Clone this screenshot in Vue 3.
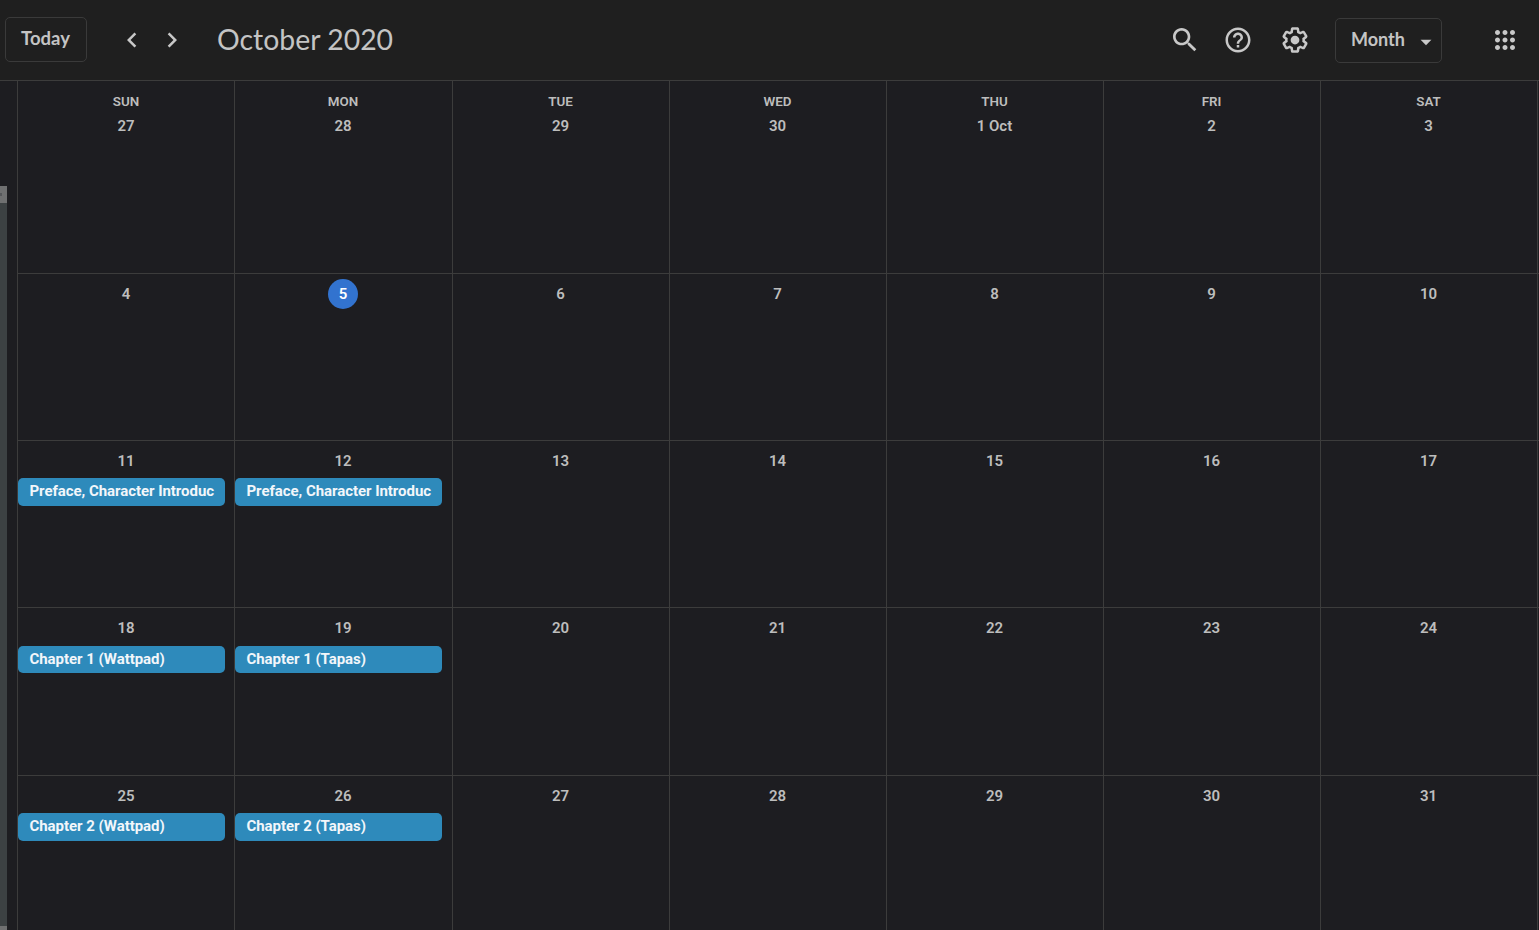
<script setup>
const names = ['SUN', 'MON', 'TUE', 'WED', 'THU', 'FRI', 'SAT']
const weeks = [
  ['27', '28', '29', '30', '1 Oct', '2', '3'],
  ['4', '5', '6', '7', '8', '9', '10'],
  ['11', '12', '13', '14', '15', '16', '17'],
  ['18', '19', '20', '21', '22', '23', '24'],
  ['25', '26', '27', '28', '29', '30', '31'],
]
const events = {
  '2-0': 'Preface, Character Introduc',
  '2-1': 'Preface, Character Introduc',
  '3-0': 'Chapter 1 (Wattpad)',
  '3-1': 'Chapter 1 (Tapas)',
  '4-0': 'Chapter 2 (Wattpad)',
  '4-1': 'Chapter 2 (Tapas)',
}
</script>

<template>
  <div class="page">
    <header class="top">
      <button class="today">Today</button>
      <div class="arrows">
        <svg class="ic" viewBox="0 0 24 24"><path d="M15.41 7.41L14 6l-6 6 6 6 1.41-1.41L10.83 12z" /></svg>
        <svg class="ic" viewBox="0 0 24 24"><path d="M8.59 16.59L10 18l6-6-6-6-1.41 1.41L13.17 12z" /></svg>
      </div>
      <h1 class="title">October 2020</h1>
      <div class="tools">
        <svg class="ic search" viewBox="0 0 24 24"><path d="M15.5 14h-.79l-.28-.27C15.41 12.59 16 11.11 16 9.5 16 5.91 13.09 3 9.5 3S3 5.91 3 9.5 5.91 16 9.5 16c1.61 0 3.09-.59 4.23-1.57l.27.28v.79l5 4.99L20.49 19l-4.99-5zm-6 0C7.01 14 5 11.99 5 9.5S7.01 5 9.5 5 14 7.01 14 9.5 11.99 14 9.5 14z" /></svg>
        <svg class="ic help" viewBox="0 0 24 24"><path d="M11 18h2v-2h-2v2zm1-16C6.48 2 2 6.48 2 12s4.48 10 10 10 10-4.48 10-10S17.52 2 12 2zm0 18c-4.41 0-8-3.59-8-8s3.59-8 8-8 8 3.59 8 8-3.59 8-8 8zm0-14c-2.21 0-4 1.79-4 4h2c0-1.1.9-2 2-2s2 .9 2 2c0 2-3 1.75-3 5h2c0-2.25 3-2.5 3-5 0-2.21-1.79-4-4-4z" /></svg>
        <svg class="ic gear" viewBox="0 0 24 24"><path d="M13.85 22.25h-3.7c-.74 0-1.36-.54-1.45-1.27l-.27-1.89c-.27-.14-.53-.29-.79-.46l-1.8.72c-.7.26-1.47-.03-1.81-.65L2.2 15.53c-.35-.66-.2-1.44.36-1.88l1.53-1.19c-.01-.15-.02-.3-.02-.46 0-.15.01-.31.02-.46l-1.52-1.19c-.59-.45-.74-1.26-.37-1.88l1.85-3.19c.34-.62 1.11-.9 1.79-.63l1.81.73c.26-.17.52-.32.78-.46l.27-1.91c.09-.7.71-1.25 1.44-1.25h3.7c.74 0 1.36.54 1.45 1.27l.27 1.89c.27.14.53.29.79.46l1.8-.72c.71-.26 1.48.03 1.82.65l1.84 3.18c.36.66.2 1.44-.36 1.88l-1.52 1.19c.01.15.02.3.02.46s-.01.31-.02.46l1.52 1.19c.56.45.72 1.23.37 1.86l-1.86 3.22c-.34.62-1.11.9-1.8.63l-1.8-.72c-.26.17-.52.32-.78.46l-.27 1.91c-.1.68-.72 1.22-1.46 1.22zm-3.23-2h2.76l.37-2.55.53-.22c.44-.18.88-.44 1.34-.78l.45-.34 2.38.96 1.38-2.4-2.03-1.58.07-.56c.03-.26.06-.51.06-.78s-.03-.53-.06-.78l-.07-.56 2.03-1.58-1.39-2.4-2.39.96-.45-.35c-.42-.32-.87-.58-1.33-.77l-.52-.22-.37-2.55h-2.76l-.37 2.55-.53.21c-.44.19-.88.44-1.34.79l-.45.33-2.38-.95-1.39 2.39 2.03 1.58-.07.56a7 7 0 0 0-.06.79c0 .26.02.53.06.78l.07.56-2.03 1.58 1.38 2.4 2.39-.96.45.35c.43.33.86.58 1.33.77l.53.22.38 2.55z" /><circle cx="12" cy="12" r="3.5" /></svg>
        <button class="month">
          <span>Month</span>
          <svg class="caret" viewBox="0 0 24 24"><path d="M7 10l5 5 5-5z" /></svg>
        </button>
        <svg class="ic apps" viewBox="0 0 24 24"><path d="M6 8c1.1 0 2-.9 2-2s-.9-2-2-2-2 .9-2 2 .9 2 2 2zm6 12c1.1 0 2-.9 2-2s-.9-2-2-2-2 .9-2 2 .9 2 2 2zm-6 0c1.1 0 2-.9 2-2s-.9-2-2-2-2 .9-2 2 .9 2 2 2zm0-6c1.1 0 2-.9 2-2s-.9-2-2-2-2 .9-2 2 .9 2 2 2zm6 0c1.1 0 2-.9 2-2s-.9-2-2-2-2 .9-2 2 .9 2 2 2zm4-8c0 1.1.9 2 2 2s2-.9 2-2-.9-2-2-2-2 .9-2 2zm-4 2c1.1 0 2-.9 2-2s-.9-2-2-2-2 .9-2 2 .9 2 2 2zm6 6c1.1 0 2-.9 2-2s-.9-2-2-2-2 .9-2 2 .9 2 2 2zm0 6c1.1 0 2-.9 2-2s-.9-2-2-2-2 .9-2 2 .9 2 2 2z" /></svg>
      </div>
    </header>

    <main class="body">
      <aside class="gutter">
        <div class="scroll">
          <div class="thumb"></div>
          <div class="track"></div>
          <div class="thumb-end"></div>
        </div>
      </aside>
      <div class="grid">
        <template v-for="(week, w) in weeks" :key="w">
          <div v-for="(day, d) in week" :key="d" class="cell" :class="{ shift: d > 0 }">
            <div v-if="w === 0" class="dow">{{ names[d] }}</div>
            <div class="num" :class="{ now: day === '5' && w === 1 }">{{ day }}</div>
            <div v-if="events[w + '-' + d]" class="event" :class="{ thin: w === 3 }">
              {{ events[w + '-' + d] }}
            </div>
          </div>
          <div class="cell"></div>
        </template>
      </div>
    </main>
  </div>
</template>

<style scoped>
.page {
  height: 930px;
  overflow: hidden;
  display: flex;
  flex-direction: column;
  background: #1d1d21;
  font-family: Roboto, "Liberation Sans", sans-serif;
}
.top {
  height: 80px;
  flex: none;
  display: flex;
  align-items: center;
  background: #1f1f1f;
  padding-left: 5px;
  box-sizing: border-box;
  color: #c4c4c4;
}
.ic {
  width: 30px;
  height: 30px;
  fill: #c8c8c8;
  flex: none;
}
.today {
  width: 82px;
  height: 45px;
  margin-top: -1px;
  background: transparent;
  border: 1px solid #3a3a3a;
  border-radius: 5px;
  color: #c4c4c4;
  font: 700 18.5px Lato, sans-serif;
  padding: 0 1px 3px 0;
}
.arrows {
  display: flex;
  gap: 10px;
  margin-left: 30px;
}
.title {
  margin: -2px 0 0 30px;
  font: 400 28.4px Lato, sans-serif;
  color: #c4c4c4;
}
.tools {
  margin-left: auto;
  display: flex;
  align-items: center;
}
.search {
  width: 32px;
  height: 32px;
  margin-right: 22px;
}
.help {
  margin-right: 27px;
}
.gear {
  margin-right: 25px;
}
.month {
  width: 107px;
  height: 45px;
  background: transparent;
  border: 1px solid #3a3a3a;
  border-radius: 5px;
  color: #c4c4c4;
  font: 700 18px Lato, sans-serif;
  display: flex;
  align-items: center;
  padding: 0 0 3px 15px;
  box-sizing: border-box;
}
.caret {
  width: 26px;
  height: 26px;
  fill: #c8c8c8;
  margin-left: 8px;
  margin-top: 6px;
}
.apps {
  margin-left: 48px;
  margin-right: 19px;
}
.body {
  flex: 1;
  display: flex;
  min-height: 0;
  overflow: hidden;
  border-top: 1px solid #3c3c3c;
}
.gutter {
  width: 17px;
  flex: none;
}
.scroll {
  width: 7px;
  height: 100%;
  padding-top: 105px;
  box-sizing: border-box;
  display: flex;
  flex-direction: column;
}
.thumb {
  height: 17px;
  background: #6f7071;
  flex: none;
  display: flex;
  align-items: center;
}
.thumb::before {
  content: "";
  border-left: 2px solid #55575a;
  height: 3px;
}
.track {
  flex: 1;
  background: #3c4143;
}
.thumb-end {
  height: 4px;
  background: #6f7071;
  flex: none;
}
.grid {
  flex: none;
  display: grid;
  grid-template-columns: 217px 218px repeat(5, 217px) 5px;
  grid-template-rows: 193px 167px 167px 168px 180px;
}
.cell {
  border-left: 1px solid #3c3c3c;
  border-bottom: 1px solid #3c3c3c;
  min-width: 0;
  display: flex;
  flex-direction: column;
  align-items: center;
  box-sizing: border-box;
}
.shift {
  padding-right: 1px;
}
.dow {
  margin-top: 13px;
  height: 16px;
  line-height: 16px;
  font-size: 13.4px;
  font-weight: 600;
  color: #bdbdbd;
}
.num {
  margin-top: 5px;
  height: 30px;
  min-width: 30px;
  line-height: 30px;
  text-align: center;
  border-radius: 50%;
  font-size: 15px;
  font-weight: 600;
  color: #bdbdbd;
}
.dow + .num {
  margin-top: 1px;
}
.now {
  background: #3273cf;
  color: #fff;
}
.event {
  align-self: flex-start;
  margin-top: 2px;
  width: 207px;
  height: 28px;
  line-height: 27px;
  background: #2e8abb;
  border-radius: 5px;
  color: #f2f6fa;
  font-size: 15px;
  font-weight: 700;
  letter-spacing: -0.05px;
  padding: 0 11.5px;
  box-sizing: border-box;
  white-space: nowrap;
  overflow: hidden;
}
.event.thin {
  margin-top: 3px;
  height: 27px;
  line-height: 26px;
}
</style>

<style>
html,
body {
  margin: 0;
  background: #1d1d21;
  overflow: hidden;
}
</style>
